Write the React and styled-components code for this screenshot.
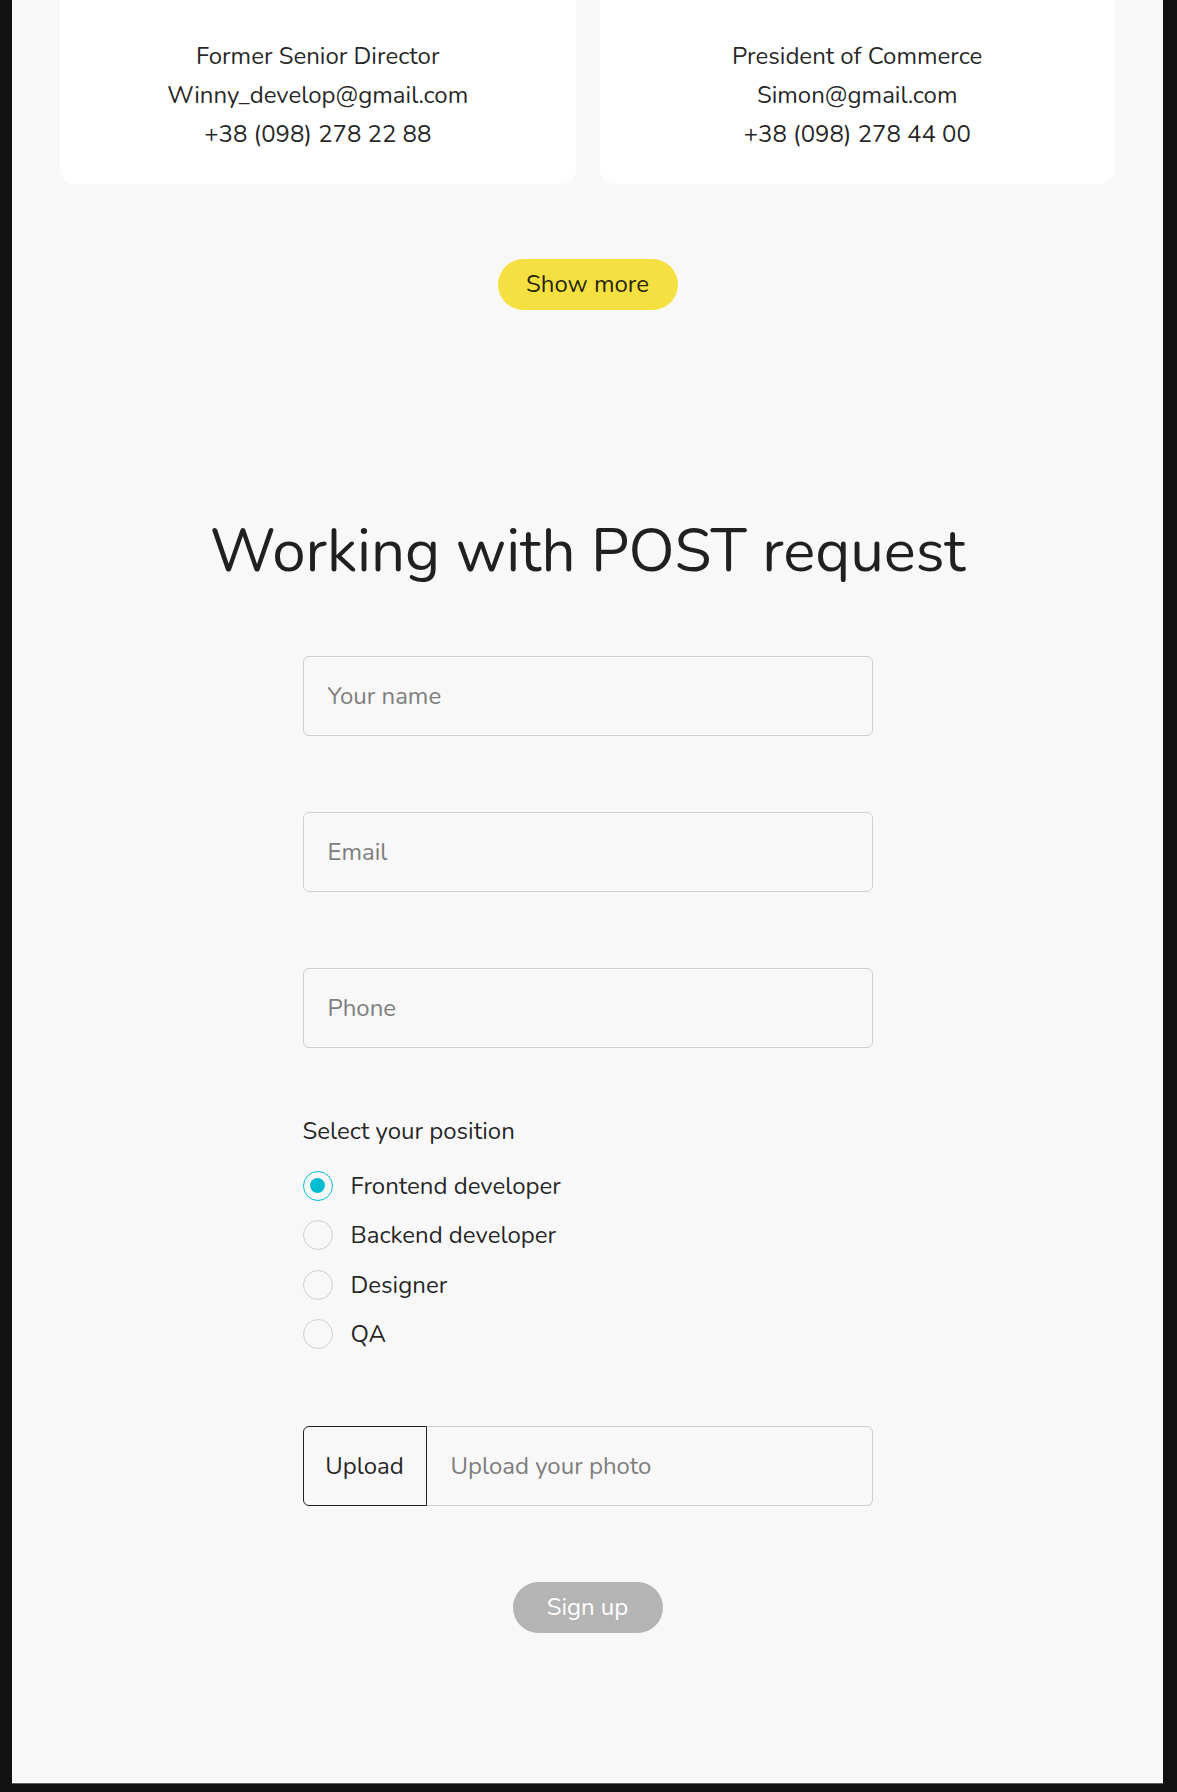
import React, { useState } from 'react';
import styled, { createGlobalStyle } from 'styled-components';

const GlobalStyle = createGlobalStyle`
  html, body {
    margin: 0;
    padding: 0;
  }
  body {
    background: #121212;
    font-family: 'Nunito', 'Lato', 'Liberation Sans', sans-serif;
    color: rgba(0, 0, 0, 0.87);
    padding-bottom: 9px;
  }
`;

const Viewport = styled.div`
  margin: 0 14px 0 12px;
  background: #f8f8f8;
  border-bottom: 1px solid #5e5e5e;
  padding-bottom: 150px;
  overflow: hidden;
  display: flex;
  flex-direction: column;
  align-items: center;
`;

const CardList = styled.div`
  width: 1055px;
  margin-top: -20px;
  display: grid;
  grid-template-columns: 1fr 1fr;
  gap: 24px;
`;

const Card = styled.div`
  background: #ffffff;
  border-radius: 15px;
  padding: 56.5px 20px 30px;
  text-align: center;
`;

const CardLine = styled.div`
  font-size: 24px;
  line-height: 39px;
  white-space: nowrap;
  overflow: hidden;
  text-overflow: ellipsis;
`;

const Pill = styled.button`
  display: block;
  width: ${p => p.$width}px;
  height: 51px;
  border: none;
  border-radius: 120px;
  background: ${p => (p.$disabled ? '#b4b4b4' : '#f4e041')};
  color: ${p => (p.$disabled ? '#ffffff' : 'rgba(0, 0, 0, 0.87)')};
  font-family: inherit;
  font-size: 24px;
  line-height: 39px;
  padding: 0;
  cursor: ${p => (p.$disabled ? 'default' : 'pointer')};
  margin-top: ${p => p.$top}px;
`;

const Heading = styled.h1`
  margin: 211px 0 0;
  font-size: 60px;
  line-height: 60px;
  font-weight: 400;
  text-align: center;
  color: rgba(0, 0, 0, 0.87);
`;

const Form = styled.form`
  width: 570px;
  margin-top: 75px;
  display: flex;
  flex-direction: column;
`;

const Fields = styled.div`
  display: flex;
  flex-direction: column;
  gap: 76px;
`;

const TextInput = styled.input`
  box-sizing: border-box;
  width: 100%;
  height: 80px;
  border: 1.5px solid #d0cfcf;
  border-radius: 6px;
  background: transparent;
  padding: 0 24px;
  font-family: inherit;
  font-size: 24px;
  color: rgba(0, 0, 0, 0.87);
  outline: none;

  &::placeholder {
    color: #7e7e7e;
  }
`;

const Fieldset = styled.fieldset`
  border: none;
  margin: 64.5px 0 0;
  padding: 0;
  display: flex;
  flex-direction: column;
  gap: 10.5px;
`;

const Legend = styled.div`
  font-size: 24px;
  line-height: 39px;
  margin-bottom: 4.5px;
`;

const RadioRow = styled.label`
  display: flex;
  align-items: center;
  gap: 18px;
  height: 39px;
  font-size: 24px;
  cursor: pointer;
`;

const Radio = styled.input`
  appearance: none;
  box-sizing: border-box;
  margin: 0;
  width: 30px;
  height: 30px;
  border-radius: 50%;
  border: 1.5px solid #d0cfcf;
  display: grid;
  place-items: center;
  cursor: pointer;

  &::before {
    content: '';
    width: 15px;
    height: 15px;
    border-radius: 50%;
    background: #00bdd3;
    transform: scale(0);
  }

  &:checked {
    border-color: #00bdd3;
  }
  &:checked::before {
    transform: scale(1);
  }
`;

const UploadBox = styled.label`
  display: flex;
  height: 80px;
  margin-top: 72px;
  cursor: pointer;
`;

const UploadButton = styled.span`
  box-sizing: border-box;
  width: 124px;
  border: 1.5px solid rgba(0, 0, 0, 0.87);
  border-radius: 6px 0 0 6px;
  display: flex;
  align-items: center;
  justify-content: center;
  font-size: 24px;
`;

const UploadName = styled.span`
  flex: 1;
  box-sizing: border-box;
  border: 1.5px solid #d0cfcf;
  border-left: none;
  border-radius: 0 6px 6px 0;
  display: flex;
  align-items: center;
  padding-left: 24px;
  font-size: 24px;
  color: #7e7e7e;
`;

const Centered = styled.div`
  display: flex;
  justify-content: center;
`;

const users = [
  {
    id: 1,
    position: 'Former Senior Director',
    email: 'Winny_develop@gmail.com',
    phone: '+38 (098) 278 22 88',
  },
  {
    id: 2,
    position: 'President of Commerce',
    email: 'Simon@gmail.com',
    phone: '+38 (098) 278 44 00',
  },
];

const positions = ['Frontend developer', 'Backend developer', 'Designer', 'QA'];

function App() {
  const [position, setPosition] = useState(positions[0]);

  return (
    <>
      <GlobalStyle />
      <Viewport>
        <CardList>
          {users.map(user => (
            <Card key={user.id}>
              <CardLine>{user.position}</CardLine>
              <CardLine>{user.email}</CardLine>
              <CardLine>{user.phone}</CardLine>
            </Card>
          ))}
        </CardList>

        <Pill type="button" $width={180} $top={75}>
          Show more
        </Pill>

        <Heading>Working with POST request</Heading>

        <Form onSubmit={e => e.preventDefault()}>
          <Fields>
            <TextInput type="text" placeholder="Your name" />
            <TextInput type="email" placeholder="Email" />
            <TextInput type="tel" placeholder="Phone" />
          </Fields>

          <Fieldset>
            <Legend>Select your position</Legend>
            {positions.map(p => (
              <RadioRow key={p}>
                <Radio
                  type="radio"
                  name="position"
                  checked={position === p}
                  onChange={() => setPosition(p)}
                />
                {p}
              </RadioRow>
            ))}
          </Fieldset>

          <UploadBox>
            <input type="file" style={{ display: 'none' }} />
            <UploadButton>Upload</UploadButton>
            <UploadName>Upload your photo</UploadName>
          </UploadBox>

          <Centered>
            <Pill type="submit" $width={150} $top={76} $disabled>
              Sign up
            </Pill>
          </Centered>
        </Form>
      </Viewport>
    </>
  );
}

export default App;
